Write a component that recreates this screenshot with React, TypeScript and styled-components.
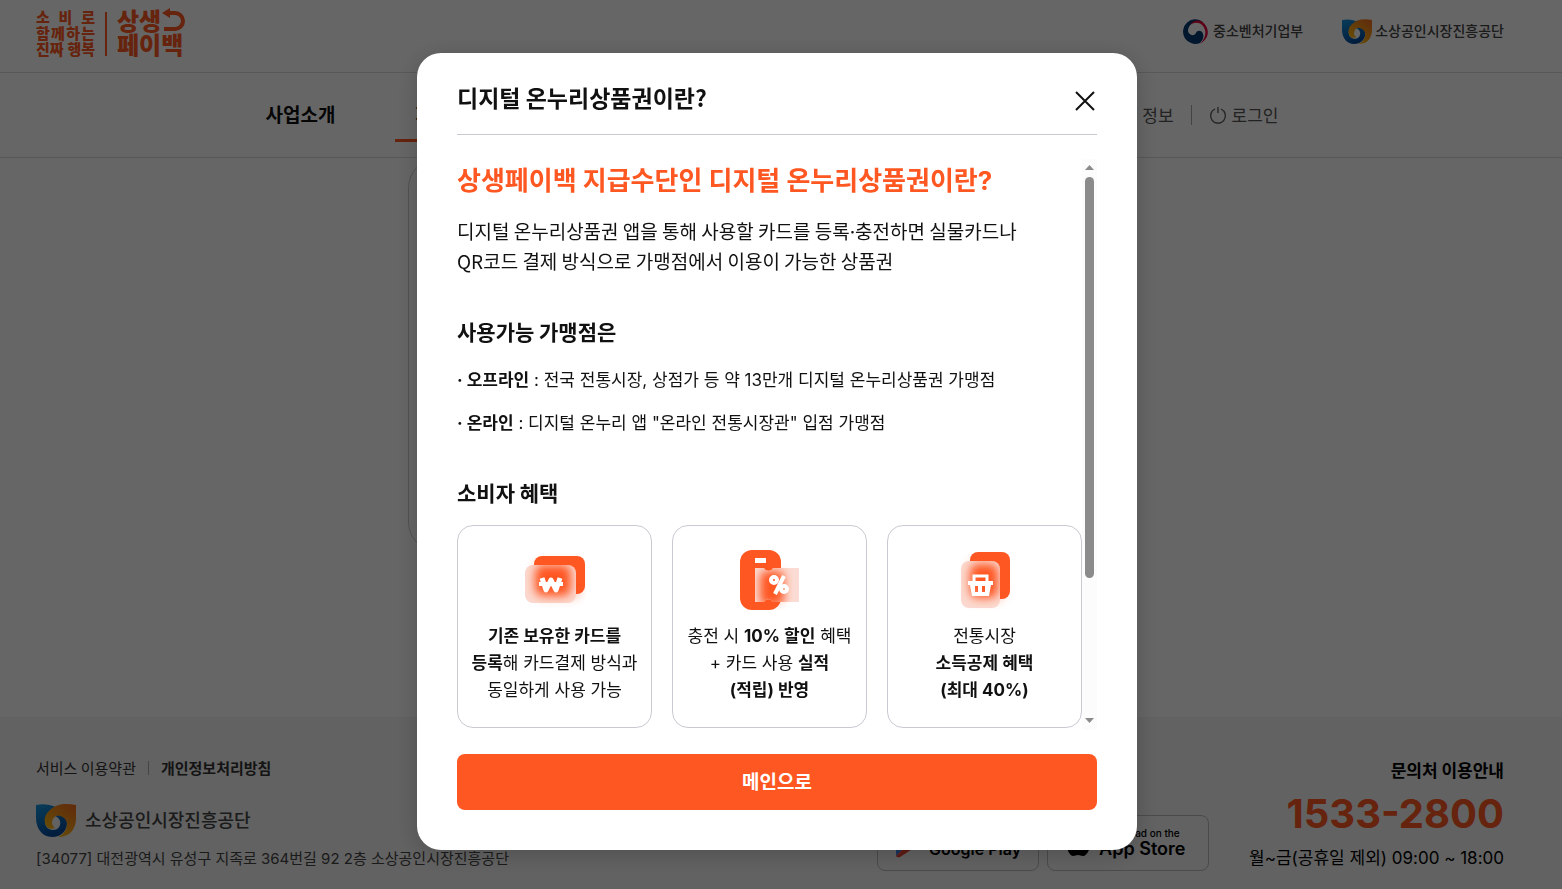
import React from 'react';
import styled, { createGlobalStyle } from 'styled-components';

const orange = '#ff5722';
const mixed = `Inter, "Noto Sans CJK KR", sans-serif`;
const korean = `"Noto Sans CJK KR", sans-serif`;

const GlobalStyle = createGlobalStyle`
  *, *::before, *::after { box-sizing: border-box; }
  body { margin: 0; background: #fff; color: #111; font-family: ${mixed}; overflow: hidden; }
  h1, h2, h3, p, ul { margin: 0; padding: 0; }
  ul { list-style: none; }
  a { color: inherit; text-decoration: none; }
  button { font: inherit; border: 0; padding: 0; background: none; cursor: pointer; }
`;

const Page = styled.div`
  display: flex;
  flex-direction: column;
  min-height: 100vh;
`;

const TopBar = styled.header`
  display: flex;
  justify-content: space-between;
  align-items: flex-start;
  height: 73px;
  padding: 7px 58px 0 36px;
  border-bottom: 1px solid #ddd;
`;

const Brand = styled.a`
  display: flex;
  align-items: center;
  color: ${orange};
  font-family: ${korean};
  font-weight: 900;
`;

const Slogan = styled.span`
  display: flex;
  flex-direction: column;
  width: 59px;
  padding-top: 2px;
  font-size: 15px;
  line-height: 16px;
`;

const SloganLine = styled.span`
  display: flex;
  justify-content: space-between;
`;

const BrandRule = styled.span`
  width: 2px;
  height: 44px;
  margin: 4px 10px 0;
  background: ${orange};
`;

const BrandName = styled.span`
  display: flex;
  flex-direction: column;
  font-size: 24px;
  line-height: 24px;
`;

const BrandLine = styled.span`
  display: flex;
  align-items: center;
`;

const Partners = styled.div`
  display: flex;
  gap: 39px;
  padding-top: 9px;
`;

const Partner = styled.a<{ $size: number; $gap: number }>`
  display: flex;
  align-items: center;
  gap: ${(p) => p.$gap}px;
  color: #444;
  font-family: ${korean};
  font-size: ${(p) => p.$size}px;
  font-weight: 500;
  line-height: 28px;
`;

const PartnerName = styled.span`
  padding-bottom: 3px;
`;

const NavBar = styled.nav`
  height: 85px;
  padding-right: 18px;
  border-bottom: 1px solid #ddd;
`;

const NavInner = styled.div`
  display: flex;
  justify-content: space-between;
  max-width: 1013px;
  height: 69px;
  margin: 0 auto;
`;

const Menu = styled.ul`
  display: flex;
  gap: 60px;
  font-family: ${korean};
  font-size: 19px;
  font-weight: 700;
  line-height: 82px;
`;

const MenuLink = styled.a<{ $active?: boolean }>`
  display: block;
  height: 69px;
  padding: ${(p) => (p.$active ? '0 20px' : '0')};
  border-bottom: ${(p) => (p.$active ? `3px solid ${orange}` : '0')};
`;

const Utility = styled.div`
  display: flex;
  align-items: center;
  height: 84px;
  color: #555;
  font-family: ${korean};
  font-size: 17px;
  line-height: 24px;
`;

const Divider = styled.span<{ $height: number; $space: number }>`
  width: 1px;
  height: ${(p) => p.$height}px;
  margin: 0 ${(p) => p.$space}px;
  background: #aaa;
`;

const UtilityLink = styled.a`
  display: flex;
  align-items: center;
  gap: 5px;
`;

const Main = styled.main`
  flex: 1;
  padding-right: 20px;
`;

const Panel = styled.section`
  max-width: 726px;
  height: 394px;
  margin: 0 auto;
  border: 1px solid #ccc;
  border-radius: 30px;
`;

const Footer = styled.footer`
  display: flex;
  justify-content: space-between;
  height: 172px;
  padding: 39px 58px 0 36px;
  background: #f4f4f4;
`;

const FooterInfo = styled.div`
  display: flex;
  flex-direction: column;
  color: #444;
  font-size: 15px;
  line-height: 24px;
`;

const Policies = styled.div`
  display: flex;
  align-items: center;
  margin-bottom: 24px;
  color: #333;
  font-family: ${korean};
`;

const Address = styled.p`
  margin-top: 10px;
`;

const FooterSide = styled.div`
  display: flex;
  gap: 40px;
`;

const Stores = styled.div`
  display: flex;
  gap: 8px;
  padding-top: 59px;
`;

const StoreLink = styled.a`
  display: flex;
  align-items: center;
  gap: 8px;
  width: 162px;
  height: 56px;
  padding-left: 17px;
  border: 1px solid #bbb;
  border-radius: 8px;
  color: #000;
`;

const StoreText = styled.span<{ $size: number }>`
  display: flex;
  flex-direction: column;
  font-size: ${(p) => p.$size}px;
  font-weight: 600;
  line-height: 20px;
`;

const StoreSmall = styled.span`
  font-size: 10px;
  font-weight: 500;
  line-height: 12px;
`;

const Contact = styled.div`
  color: #000;
  font-size: 17px;
  line-height: 28px;
  text-align: right;
`;

const ContactTitle = styled.h2`
  font-family: ${korean};
  font-size: 17px;
  font-weight: 700;
  line-height: 28px;
`;

const Phone = styled.p`
  color: ${orange};
  font-size: 40px;
  font-weight: 700;
  line-height: 60px;
`;

const Overlay = styled.div`
  position: fixed;
  inset: 0;
  display: flex;
  justify-content: center;
  align-items: flex-start;
  padding: 53px 8px 39px 0;
  background: rgba(0, 0, 0, 0.6);
`;

const Dialog = styled.section`
  width: 720px;
  padding: 30px 40px 40px;
  border-radius: 24px;
  background: #fff;
  box-shadow: 0 4px 24px rgba(0, 0, 0, 0.2);
`;

const DialogHeader = styled.header`
  display: flex;
  justify-content: space-between;
  align-items: flex-start;
  height: 52px;
  border-bottom: 1px solid #c9c9d3;
`;

const DialogTitle = styled.h1`
  font-family: ${korean};
  font-size: 23px;
  font-weight: 700;
  line-height: 28px;
`;

const CloseButton = styled.button`
  display: flex;
  width: 24px;
  height: 36px;
  align-items: center;
  justify-content: center;
`;

const ScrollArea = styled.div`
  display: flex;
  height: 571px;
  margin-top: 24px;
`;

const Content = styled.div`
  flex: 1;
  min-width: 0;
`;

const Scrollbar = styled.div`
  display: flex;
  flex-direction: column;
  align-items: center;
  justify-content: space-between;
  width: 15px;
  padding: 6px 0 7px;
  background: #fcfcfc;
`;

const Thumb = styled.div`
  width: 9px;
  height: 401px;
  margin: 7px 0 auto;
  border-radius: 5px;
  background: #8b8b8b;
`;

const Headline = styled.h2`
  color: ${orange};
  font-size: 26px;
  font-weight: 700;
  line-height: 44px;
`;

const Lead = styled.p`
  margin-top: 13px;
  font-family: ${korean};
  font-size: 19px;
  line-height: 30px;
`;

const MiddleDot = styled.span`
  font-family: ${mixed};
  line-height: 1;
`;

const SectionTitle = styled.h3`
  margin-top: 39px;
  font-family: ${korean};
  font-size: 21px;
  font-weight: 700;
  line-height: 32px;
`;

const List = styled.ul`
  margin-top: 20px;
  font-size: 17px;
  line-height: 27px;
`;

const Item = styled.li`
  & + & { margin-top: 16px; }
`;

const Cards = styled.ul`
  display: grid;
  grid-template-columns: repeat(3, 1fr);
  gap: 20px;
  margin-top: 17px;
`;

const Card = styled.li`
  display: flex;
  flex-direction: column;
  align-items: center;
  height: 203px;
  padding-top: 22px;
  border: 1px solid #c9c9d3;
  border-radius: 16px;
  font-size: 17px;
  line-height: 27px;
  text-align: center;
  white-space: nowrap;
`;

const CardText = styled.p`
  margin-top: 13px;
`;

const MainButton = styled.button`
  width: 100%;
  height: 56px;
  margin-top: 24px;
  padding-bottom: 3px;
  border-radius: 8px;
  background: ${orange};
  color: #fff;
  font-family: ${korean};
  font-size: 19px;
  font-weight: 700;
`;

function AgencyMark({ width, id }: { width: number; id: string }) {
  return (
    <svg width={width} height={Math.round(width * 0.83)} viewBox="0 0 40 33" aria-hidden="true">
      <defs>
        <linearGradient id={`${id}b`} x1="0" y1="0" x2="0.4" y2="1">
          <stop offset="0" stopColor="#1598e0" />
          <stop offset="1" stopColor="#064a9c" />
        </linearGradient>
        <linearGradient id={`${id}o`} x1="1" y1="0" x2="0.3" y2="1">
          <stop offset="0" stopColor="#f26a21" />
          <stop offset="1" stopColor="#ffc20e" />
        </linearGradient>
      </defs>
      <path d="M0 1Q11-1 20 3C14 6 9 11 9 18c0 5 4 8 8 8 6 0 8-5 7-9-1-3-3-4-5-5 5-3 12 1 12 7 0 8-6 14-15 14C6 33 0 24 0 14Z" fill={`url(#${id}b)`} />
      <path d="M40 1C29-1 20 0 14 6c-5 4-6 9-5 13 1 5 5 7 10 5-3-2-4-6-2-9 2-4 5-4 7-3 4 1 7 4 7 8 0 6-4 11-9 13 12 0 18-8 18-19Z" fill={`url(#${id}o)`} />
    </svg>
  );
}

function TaegukMark() {
  return (
    <svg width="25" height="25" viewBox="0 0 25 25" aria-hidden="true">
      <path d="M20 3A12.300 12.300 0 1 0 17 24C20 21 21 18 20 15 19 11 14 11 13 14 11 18 5 16 5 11 6 4 13 1 20 3Z" fill="#003a70" />
      <path d="M7 6C11 0 19 0 23 7c4 7 1 14-6 18 6-6 7-13 3-18C17 3 11 3 7 6Z" fill="#e4003a" />
    </svg>
  );
}

function CardIcon() {
  return (
    <svg width="62" height="62" viewBox="0 0 62 62" aria-hidden="true">
      <defs>
        <clipPath id="cardClip"><rect x="1" y="17" width="51" height="38" rx="8" /></clipPath>
        <filter id="cardBlur" x="-40%" y="-40%" width="180%" height="180%"><feGaussianBlur stdDeviation="5" /></filter>
      </defs>
      <rect x="10" y="13" width="47" height="38" rx="8" fill={orange} opacity="0.3" filter="url(#cardBlur)" />
      <rect x="10" y="8" width="51" height="38" rx="8" fill={orange} />
      <g clipPath="url(#cardClip)">
        <rect x="1" y="17" width="51" height="38" fill="#fbd9d0" />
        <rect x="11" y="17" width="36" height="31" rx="8" fill={orange} filter="url(#cardBlur)" />
      </g>
      <path d="M18 30l4 12 5-10 5 10 4-12" fill="none" stroke="#fff" strokeWidth="5" strokeLinejoin="round" />
      <path d="M15 36h24" stroke="#fff" strokeWidth="4" />
    </svg>
  );
}

function CouponIcon() {
  return (
    <svg width="62" height="62" viewBox="0 0 62 62" aria-hidden="true">
      <defs>
        <clipPath id="couponClip"><path d="M16 20h9a5 5 0 0 0 9 0h26v34H34a5 5 0 0 0-9 0h-9Z" /></clipPath>
        <filter id="couponBlur" x="-60%" y="-40%" width="220%" height="180%"><feGaussianBlur stdDeviation="5" /></filter>
      </defs>
      <rect x="20" y="22" width="26" height="34" rx="8" fill={orange} opacity="0.3" filter="url(#couponBlur)" />
      <rect x="1" y="2" width="41" height="60" rx="12" fill={orange} />
      <rect x="16" y="10" width="11" height="5" fill="#fff" />
      <g clipPath="url(#couponClip)">
        <rect x="16" y="20" width="45" height="34" fill="#fbdcd4" />
        <rect x="21" y="23" width="24" height="34" rx="6" fill={orange} filter="url(#couponBlur)" />
      </g>
      <g fill="none" stroke="#fff" strokeWidth="4">
        <circle cx="35" cy="32" r="3" /><circle cx="45" cy="41" r="3" /><path d="M45 28L36 46" />
      </g>
    </svg>
  );
}

function BasketIcon() {
  return (
    <svg width="62" height="62" viewBox="0 0 62 62" aria-hidden="true">
      <defs>
        <clipPath id="basketClip"><rect x="7" y="13" width="39" height="47" rx="8" /></clipPath>
        <filter id="basketBlur" x="-50%" y="-40%" width="200%" height="180%"><feGaussianBlur stdDeviation="5" /></filter>
      </defs>
      <rect x="14" y="12" width="36" height="42" rx="8" fill={orange} opacity="0.3" filter="url(#basketBlur)" />
      <rect x="16" y="4" width="40" height="47" rx="8" fill={orange} />
      <g clipPath="url(#basketClip)">
        <rect x="7" y="13" width="39" height="47" fill="#fbd9d0" />
        <rect x="16" y="16" width="28" height="34" rx="8" fill={orange} filter="url(#basketBlur)" />
      </g>
      <path d="M20 35v-7h13v7" fill="none" stroke="#fff" strokeWidth="3" />
      <path fillRule="evenodd" d="M14 33h25v4h-2l-2 11H18l-2-11h-2ZM21 38v6h3v-6ZM28 38v6h3v-6Z" fill="#fff" />
    </svg>
  );
}

export default function App() {
  return (
    <>
      <GlobalStyle />
      <Page>
        <TopBar>
          <Brand href="#">
            <Slogan>
              <SloganLine><span>소</span><span>비</span><span>로</span></SloganLine>
              <SloganLine><span>함</span><span>께</span><span>하</span><span>는</span></SloganLine>
              <SloganLine><span>진짜</span><span>행복</span></SloganLine>
            </Slogan>
            <BrandRule />
            <BrandName>
              <BrandLine>
                상생
                <svg width="24" height="24" viewBox="0 0 24 24" aria-hidden="true">
                  <path d="M6 5h8a8 8 0 0 1 0 16H3" fill="none" stroke={orange} strokeWidth="4" />
                  <path d="M1 5l8-5v10Z" fill={orange} />
                </svg>
              </BrandLine>
              <BrandLine>페이백</BrandLine>
            </BrandName>
          </Brand>
          <Partners>
            <Partner href="#" $size={14} $gap={5}><TaegukMark /><PartnerName>중소벤처기업부</PartnerName></Partner>
            <Partner href="#" $size={14} $gap={3}><AgencyMark width={30} id="top" /><PartnerName>소상공인시장진흥공단</PartnerName></Partner>
          </Partners>
        </TopBar>
        <NavBar>
          <NavInner>
            <Menu>
              <li><MenuLink href="#">사업소개</MenuLink></li>
              <li><MenuLink href="#" $active>페이백 신청</MenuLink></li>
            </Menu>
            <Utility>
              <UtilityLink href="#">내 정보</UtilityLink>
              <Divider $height={20} $space={17} />
              <UtilityLink href="#">
                <svg width="18" height="18" viewBox="0 0 18 18" fill="none" stroke="#555" strokeWidth="1.300" aria-hidden="true">
                  <path d="M6 3a7.400 7.400 0 1 0 6 0M9 1v6" />
                </svg>
                로그인
              </UtilityLink>
            </Utility>
          </NavInner>
        </NavBar>
        <Main><Panel /></Main>
        <Footer>
          <FooterInfo>
            <Policies>
              <a href="#">서비스 이용약관</a>
              <Divider $height={14} $space={12} />
              <a href="#"><b>개인정보처리방침</b></a>
            </Policies>
            <Partner href="#" $size={18} $gap={9}><AgencyMark width={40} id="foot" /><PartnerName>소상공인시장진흥공단</PartnerName></Partner>
            <Address>[34077] 대전광역시 유성구 지족로 364번길 92 2층 소상공인시장진흥공단</Address>
          </FooterInfo>
          <FooterSide>
            <Stores>
              <StoreLink href="#">
                <svg width="26" height="30" viewBox="0 0 26 30" aria-hidden="true">
                  <path d="M1 2v26l13-13Z" fill="#4285f4" />
                  <path d="M1 2Q2 0 5 1L19 10 14 15Z" fill="#34a853" />
                  <path d="M19 10l6 4q1 1 0 2l-6 4-5-5Z" fill="#fbbc04" />
                  <path d="M1 28Q2 30 5 29L19 20 14 15Z" fill="#ea4335" />
                </svg>
                <StoreText $size={16}><StoreSmall>GET IT ON</StoreSmall>Google Play</StoreText>
              </StoreLink>
              <StoreLink href="#">
                <svg width="26" height="28" viewBox="-1 0 26 28" aria-hidden="true">
                  <path d="M16 1c0 3-2 6-5 6 0-3 2-5 5-6ZM12 9c2 0 3-2 6-1 2 0 3 1 4 2-5 3-4 9 1 11-2 4-4 6-6 6s-3-1-5-1-3 1-5 1C3 27-1 17 2 12c2-5 6-5 10-3Z" />
                </svg>
                <StoreText $size={18}><StoreSmall>Download on the</StoreSmall>App Store</StoreText>
              </StoreLink>
            </Stores>
            <Contact>
              <ContactTitle>문의처 이용안내</ContactTitle>
              <Phone>1533-2800</Phone>
              <p>월~금(공휴일 제외) 09:00 ~ 18:00</p>
            </Contact>
          </FooterSide>
        </Footer>
      </Page>
      <Overlay>
        <Dialog role="dialog" aria-modal="true" aria-labelledby="dialog-title">
          <DialogHeader>
            <DialogTitle id="dialog-title">디지털 온누리상품권이란?</DialogTitle>
            <CloseButton aria-label="닫기">
              <svg width="20" height="20" viewBox="0 0 20 20" fill="none" stroke="#111" strokeWidth="2" aria-hidden="true">
                <path d="M1 1l18 18M19 1L1 19" />
              </svg>
            </CloseButton>
          </DialogHeader>
          <ScrollArea>
            <Content>
              <Headline>상생페이백 지급수단인 디지털 온누리상품권이란?</Headline>
              <Lead>
                디지털 온누리상품권 앱을 통해 사용할 카드를 등록<MiddleDot>·</MiddleDot>충전하면 실물카드나<br />
                QR코드 결제 방식으로 가맹점에서 이용이 가능한 상품권
              </Lead>
              <SectionTitle>사용가능 가맹점은</SectionTitle>
              <List>
                <Item><b>· 오프라인</b> : 전국 전통시장, 상점가 등 약 13만개 디지털 온누리상품권 가맹점</Item>
                <Item><b>· 온라인</b> : 디지털 온누리 앱 "온라인 전통시장관" 입점 가맹점</Item>
              </List>
              <SectionTitle>소비자 혜택</SectionTitle>
              <Cards>
                <Card>
                  <CardIcon />
                  <CardText><b>기존 보유한 카드를<br />등록</b>해 카드결제 방식과<br />동일하게 사용 가능</CardText>
                </Card>
                <Card>
                  <CouponIcon />
                  <CardText>충전 시 <b>10% 할인</b> 혜택<br />+ 카드 사용 <b>실적<br />(적립) 반영</b></CardText>
                </Card>
                <Card>
                  <BasketIcon />
                  <CardText>전통시장<br /><b>소득공제 혜택<br />(최대 40%)</b></CardText>
                </Card>
              </Cards>
            </Content>
            <Scrollbar aria-hidden="true">
              <svg width="9" height="5" viewBox="0 0 9 5"><path d="M0 5l4.500-5L9 5Z" fill="#8b8b8b" /></svg>
              <Thumb />
              <svg width="9" height="5" viewBox="0 0 9 5"><path d="M0 0l4.500 5L9 0Z" fill="#8b8b8b" /></svg>
            </Scrollbar>
          </ScrollArea>
          <MainButton>메인으로</MainButton>
        </Dialog>
      </Overlay>
    </>
  );
}
